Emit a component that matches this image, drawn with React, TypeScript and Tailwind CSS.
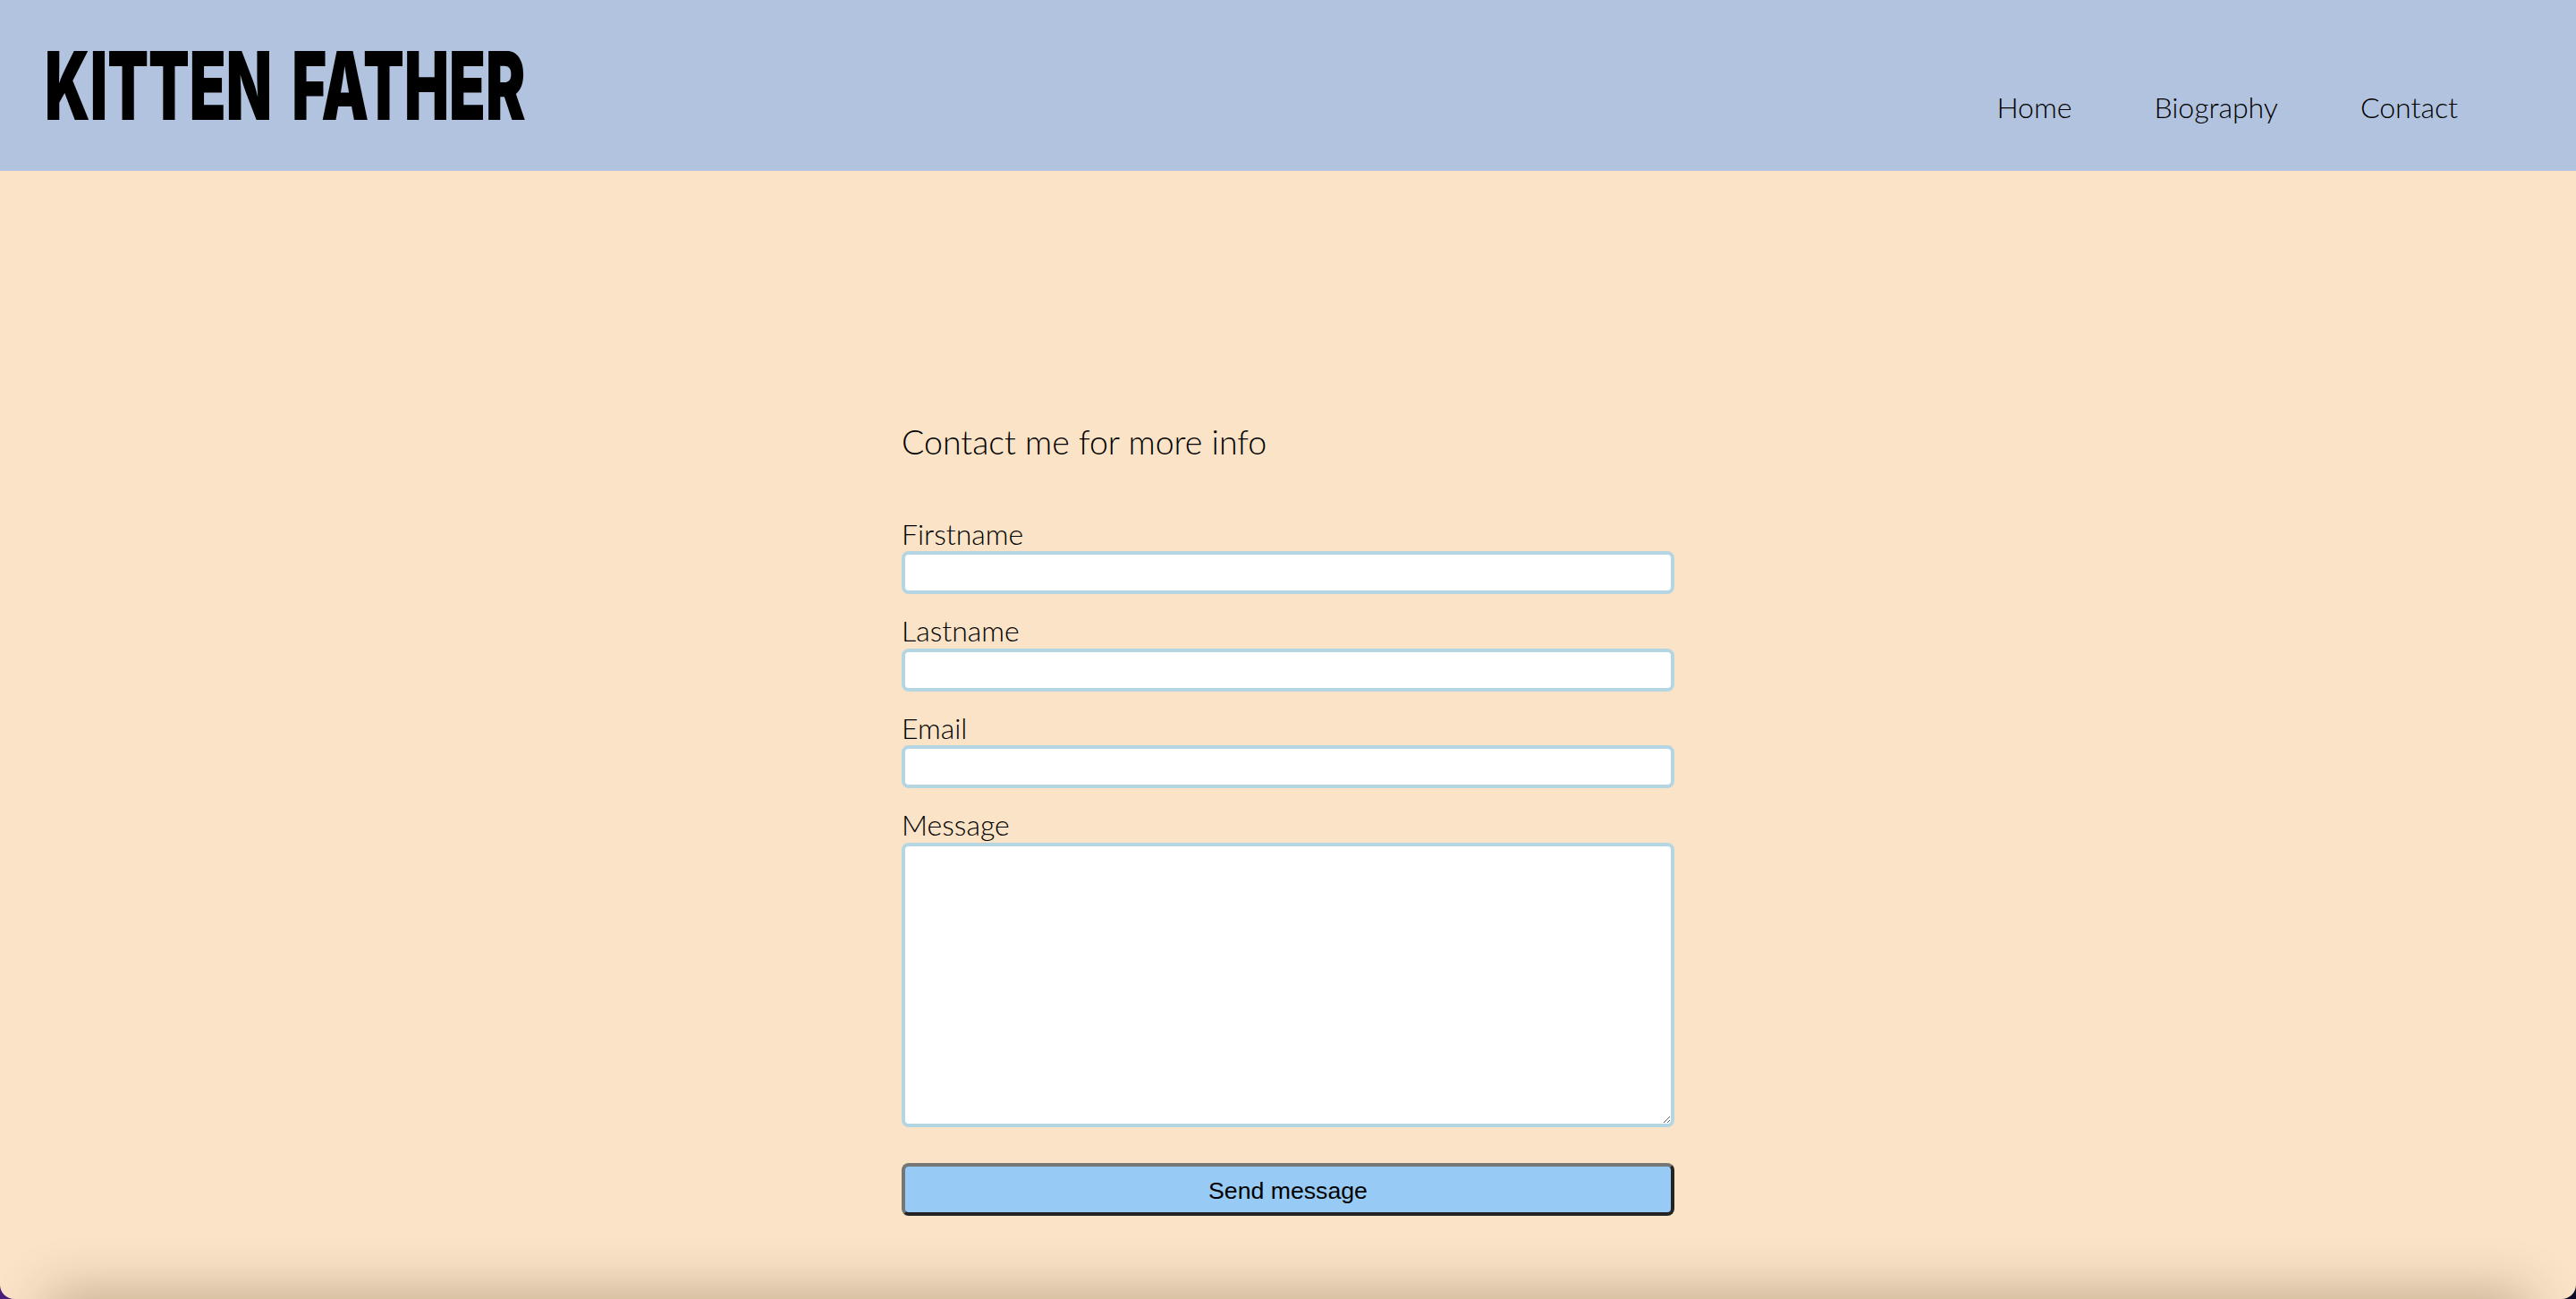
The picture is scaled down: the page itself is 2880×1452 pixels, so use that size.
import React from "react";

const lato = { fontFamily: "Lato, 'Open Sans', sans-serif" };

function FormField({ label, textarea = false }: { label: string; textarea?: boolean }) {
  return (
    <div className="flex flex-col">
      <label className="text-[32px] font-light leading-[38.4px] text-black">{label}</label>
      {textarea ? (
        <textarea className="h-[318px] w-full rounded-[8px] border-[4px] border-[#b4d6e2] bg-white outline-none" />
      ) : (
        <input
          type="text"
          className="h-[48px] w-full rounded-[8px] border-[4px] border-[#b4d6e2] bg-white outline-none"
        />
      )}
    </div>
  );
}

export default function App() {
  return (
    <div className="h-[1452px] w-full bg-gradient-to-r from-[#4a1d7a] to-[#0e0b28]" style={lato}>
      <div className="relative flex h-full flex-col overflow-hidden rounded-b-[16px] bg-[#fae3c6]">
        <header className="flex h-[191px] shrink-0 items-center justify-between bg-[#b1c3de] pl-[50px] pr-[132px]">
          <h1
            className="inline-block origin-left scale-x-[0.63] text-[106px] font-black leading-none text-black [word-spacing:14px]"
            style={{ fontFamily: "Inter, Roboto, sans-serif" }}
          >
            KITTEN FATHER
          </h1>
          <nav className="mt-[48px] flex gap-[92px] text-[32px] font-light text-black">
            <a href="#">Home</a>
            <a href="#">Biography</a>
            <a href="#">Contact</a>
          </nav>
        </header>

        <main className="flex flex-1 justify-center pt-[280px]">
          <form className="flex w-[864px] flex-col">
            <h2 className="mb-[62px] text-[37.5px] font-light leading-[45px] text-black">
              Contact me for more info
            </h2>
            <div className="flex flex-col gap-[22px]">
              <FormField label="Firstname" />
              <FormField label="Lastname" />
              <FormField label="Email" />
              <FormField label="Message" textarea />
            </div>
            <button
              type="button"
              className="mt-[40px] h-[59px] w-full rounded-[8px] border-[4px] border-t-[#767676] border-l-[#767676] border-b-[#242424] border-r-[#242424] bg-[#97cbf5] pt-[3px] text-[26.67px] text-black"
              style={{ fontFamily: "'Liberation Sans', Arial, sans-serif" }}
            >
              Send message
            </button>
          </form>
        </main>

        <div className="pointer-events-none absolute left-[60px] right-[60px] top-full h-[60px] shadow-[0_0_60px_6px_rgba(60,35,10,0.3)]" />
      </div>
    </div>
  );
}
